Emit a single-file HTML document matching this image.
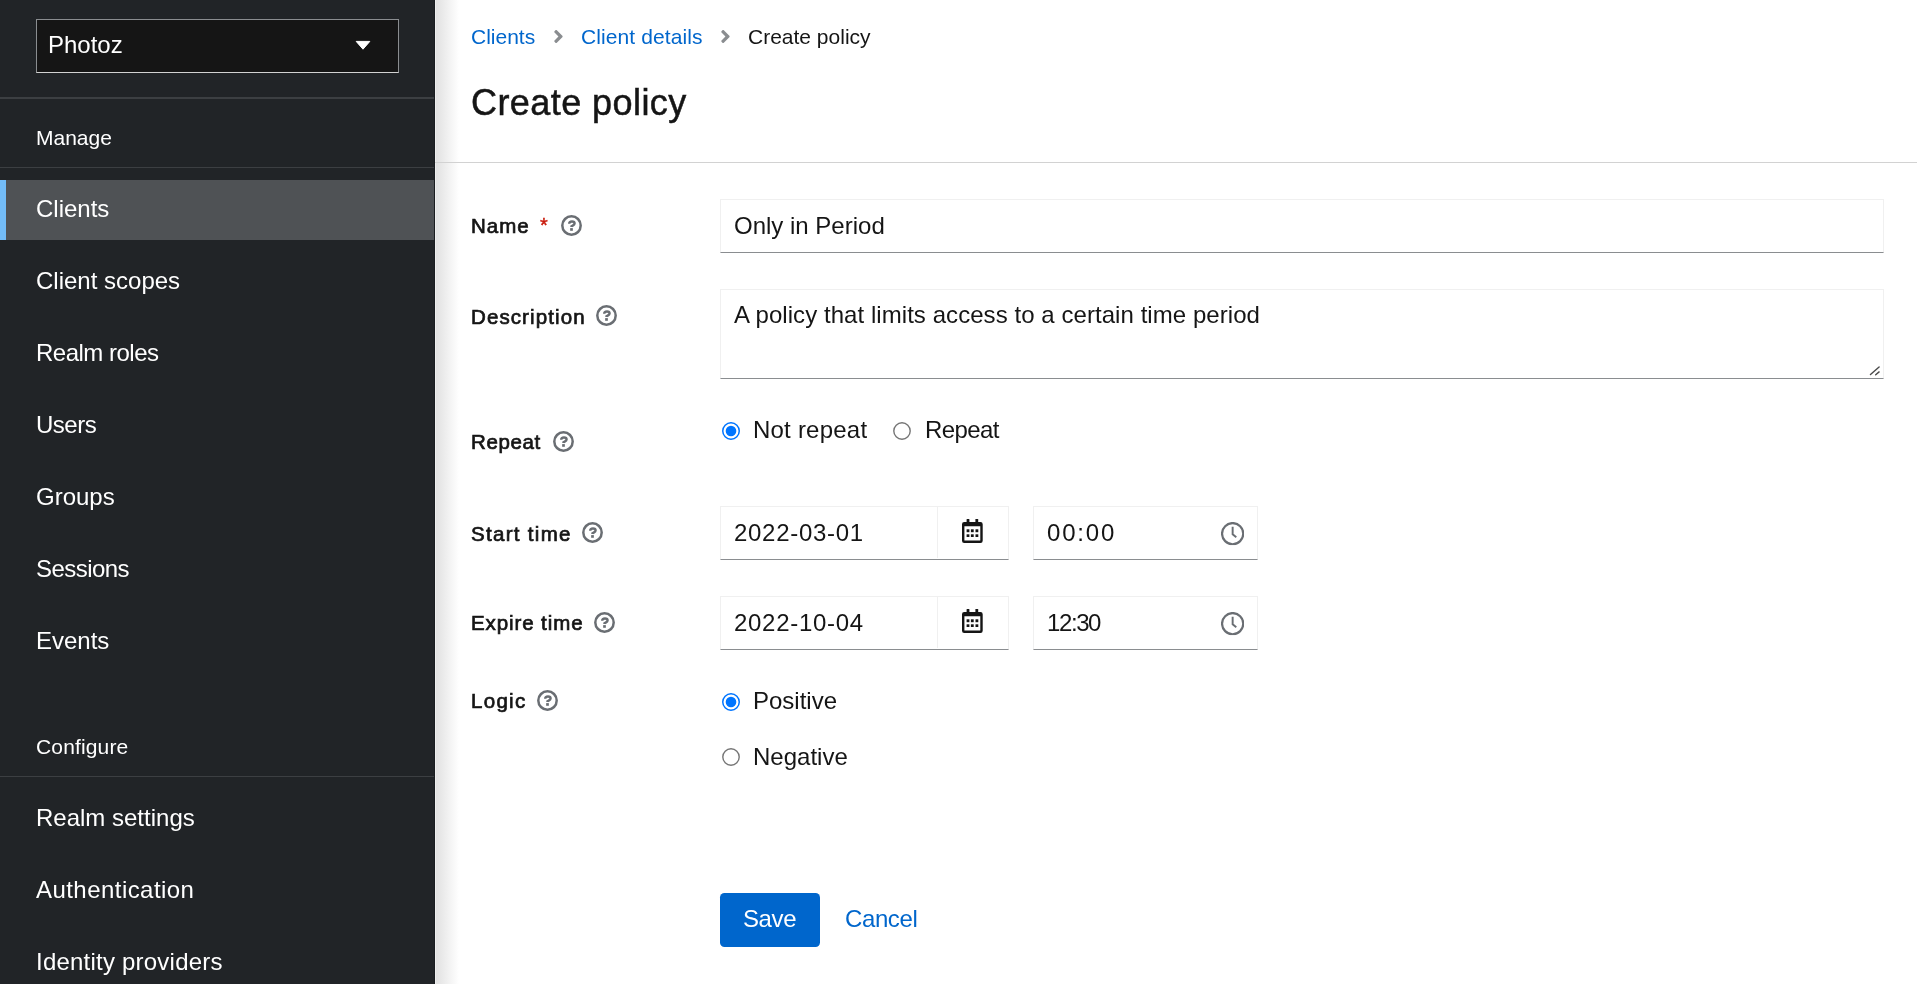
<!DOCTYPE html>
<html><head><meta charset="utf-8">
<style>body{will-change:transform}
*{box-sizing:border-box;margin:0;padding:0}
html,body{width:1917px;height:984px;overflow:hidden;background:#fff;font-family:"Liberation Sans",sans-serif;color:#151515}
.a{position:absolute;white-space:nowrap}
#side{position:absolute;left:0;top:0;width:435px;height:984px;background:#212427}
#shadow{position:absolute;left:435px;top:0;width:24px;height:984px;background:linear-gradient(to right,#e0e0e0,rgba(255,255,255,0))}
#sedge{position:absolute;left:434px;top:0;width:1px;height:984px;background:#1a1d20}
#sedge2{position:absolute;left:435px;top:0;width:1px;height:984px;background:#eeeeee}
.sep{position:absolute;left:0;width:435px;height:1.5px;background:#3c3f42}
.nav{position:absolute;left:36px;font-size:24px;line-height:24px;color:#fff}
.sect{position:absolute;left:36px;font-size:21px;line-height:21px;color:#fff}
.lbl{position:absolute;left:471px;font-size:20.5px;line-height:20.5px;font-weight:normal;-webkit-text-stroke:0.7px #151515;color:#151515}
.inp{position:absolute;background:#fff;border:1.2px solid #f0f0f0;border-bottom:1.5px solid #8a8d90}
.txt{position:absolute;font-size:24px;line-height:24px;color:#151515}
.help{position:absolute;width:21px;height:21px}
.radio{position:absolute;width:18px;height:18px}
</style></head><body>
<svg width="0" height="0" style="position:absolute">
<defs>
<symbol id="qc" viewBox="0 0 21 21"><circle cx="10.5" cy="10.5" r="9.2" fill="none" stroke="#6a6e73" stroke-width="2.5"/><path d="M8.2 8.8 C8.2 7.3 9.4 6.5 11.0 6.5 C12.6 6.5 13.6 7.4 13.6 8.6 C13.6 10.1 11.6 10.4 10.5 11.3 V12.0" fill="none" stroke="#6a6e73" stroke-width="2.4"/><rect x="9.15" y="13.1" width="2.7" height="2.7" fill="#6a6e73"/></symbol>
<symbol id="cal" viewBox="0 0 21 24"><path fill-rule="evenodd" fill="#151515" d="M2.2 3 H18.5 Q20.7 3 20.7 5.2 V21.7 Q20.7 23.9 18.5 23.9 H2.2 Q0 23.9 0 21.7 V5.2 Q0 3 2.2 3 Z M2.4 7.2 V21.6 H18.3 V7.2 Z"/><rect x="4.6" y="0" width="2.8" height="3.6" rx="0.5" fill="#151515"/><rect x="13.4" y="0" width="2.8" height="3.6" rx="0.5" fill="#151515"/><g fill="#151515"><rect x="4.6" y="10.3" width="2.8" height="2.9"/><rect x="8.9" y="10.3" width="2.8" height="2.9"/><rect x="13.5" y="10.3" width="2.8" height="2.9"/><rect x="4.6" y="15.3" width="2.8" height="2.7"/><rect x="8.9" y="15.3" width="2.8" height="2.7"/><rect x="13.5" y="15.3" width="2.8" height="2.7"/></g></symbol>
<symbol id="clk" viewBox="0 0 23.3 23.3"><circle cx="11.65" cy="11.65" r="10.6" fill="none" stroke="#6a6e73" stroke-width="2.2"/><path d="M11.65 4.8 V12.3 L15.3 15.2" fill="none" stroke="#6a6e73" stroke-width="1.95"/></symbol>
<symbol id="ron" viewBox="0 0 18 18"><circle cx="9" cy="9" r="8.25" fill="#fff" stroke="#0075ff" stroke-width="1.5"/><circle cx="9" cy="9" r="5.3" fill="#0075ff"/></symbol>
<symbol id="roff" viewBox="0 0 18 18"><circle cx="9" cy="9" r="8.2" fill="#fff" stroke="#767676" stroke-width="1.4"/></symbol>
</defs></svg>
<div id="side">
  <div class="a" style="left:36px;top:19px;width:363px;height:54px;background:#151515;border:1.2px solid #8a8d90;border-bottom-color:#d2d2d2"></div>
  <div class="nav" style="left:48px;top:33px">Photoz</div>
  <svg class="a" style="left:355px;top:40px" width="16" height="10" viewBox="0 0 16 10"><path d="M1.2 1.4 H14.8 L8 9.2 Z" fill="#fff" stroke="#fff" stroke-width="1" stroke-linejoin="round"/></svg>
  <div class="sep" style="top:97px"></div>
  <div class="sect" style="top:127px">Manage</div>
  <div class="sep" style="top:166.5px"></div>
  <div class="a" style="left:0;top:180px;width:435px;height:60px;background:#4f5255"></div>
  <div class="a" style="left:0;top:180px;width:6px;height:60px;background:#73bcf7"></div>
  <div class="nav" style="top:197px">Clients</div>
  <div class="nav" style="top:269px">Client scopes</div>
  <div class="nav" style="top:341px;letter-spacing:-0.5px">Realm roles</div>
  <div class="nav" style="top:413px;letter-spacing:-0.5px">Users</div>
  <div class="nav" style="top:485px">Groups</div>
  <div class="nav" style="top:557px;letter-spacing:-0.55px">Sessions</div>
  <div class="nav" style="top:629px">Events</div>
  <div class="sect" style="top:736px;letter-spacing:0.15px">Configure</div>
  <div class="sep" style="top:776px;height:1px"></div>
  <div class="nav" style="top:806px">Realm settings</div>
  <div class="nav" style="top:878px;letter-spacing:0.45px">Authentication</div>
  <div class="nav" style="top:950px;letter-spacing:0.22px">Identity providers</div>
</div>
<div id="shadow"></div>
<div id="sedge"></div>
<div id="sedge2"></div>

<!-- header -->
<div class="a" style="left:471px;top:26px;font-size:21px;line-height:21px;color:#0066cc">Clients</div>
<svg class="a" style="left:554.1px;top:30px" width="8.8" height="13" viewBox="22.6 96 208.8 320"><path fill="#8a8d90" d="M224.3 273l-136 136c-9.4 9.4-24.6 9.4-33.9 0l-22.6-22.6c-9.4-9.4-9.4-24.6 0-33.9l96.4-96.4-96.4-96.4c-9.4-9.4-9.4-24.6 0-33.9L54.3 103c9.4-9.4 24.6-9.4 33.9 0l136 136c9.5 9.4 9.5 24.6.1 34z"/></svg>
<div class="a" style="left:581px;top:26px;font-size:21px;line-height:21px;color:#0066cc;letter-spacing:0.1px">Client details</div>
<svg class="a" style="left:721.1px;top:30px" width="8.8" height="13" viewBox="22.6 96 208.8 320"><path fill="#8a8d90" d="M224.3 273l-136 136c-9.4 9.4-24.6 9.4-33.9 0l-22.6-22.6c-9.4-9.4-9.4-24.6 0-33.9l96.4-96.4-96.4-96.4c-9.4-9.4-9.4-24.6 0-33.9L54.3 103c9.4-9.4 24.6-9.4 33.9 0l136 136c9.5 9.4 9.5 24.6.1 34z"/></svg>
<div class="a" style="left:748px;top:26px;font-size:21px;line-height:21px;color:#151515">Create policy</div>
<div class="a" style="left:471px;top:85px;font-size:36px;line-height:36px;letter-spacing:0.43px;-webkit-text-stroke:0.5px #151515;color:#151515">Create policy</div>
<div class="a" style="left:435px;top:162px;width:1482px;height:1px;background:#d2d2d2"></div>

<!-- form -->
<div class="lbl" style="top:216px;letter-spacing:1.0px">Name</div>
<div class="a" style="left:540px;top:215px;font-size:20px;line-height:20px;color:#c9190b;-webkit-text-stroke:0.4px #c9190b">*</div>
<div class="lbl" style="top:307px;letter-spacing:1.1px">Description</div>
<div class="lbl" style="top:432px;letter-spacing:0.6px">Repeat</div>
<div class="lbl" style="top:524px;letter-spacing:1.3px">Start time</div>
<div class="lbl" style="top:613px;letter-spacing:0.9px">Expire time</div>
<div class="lbl" style="top:691px;letter-spacing:1.3px">Logic</div>

<div class="inp" style="left:720px;top:199px;width:1164px;height:54px"></div>
<div class="txt" style="left:734px;top:214px">Only in Period</div>
<div class="inp" style="left:720px;top:289px;width:1164px;height:90px"></div>
<div class="txt" style="left:734px;top:303px;letter-spacing:0.06px">A policy that limits access to a certain time period</div>

<div class="inp" style="left:720px;top:506px;width:289px;height:54px"></div>
<div class="a" style="left:937px;top:507px;width:1.2px;height:51px;background:#f0f0f0"></div>
<div class="txt" style="left:734px;top:521px;letter-spacing:0.7px">2022-03-01</div>
<div class="inp" style="left:1033px;top:506px;width:225px;height:54px"></div>
<div class="txt" style="left:1047px;top:521px;letter-spacing:1.8px">00:00</div>

<div class="inp" style="left:720px;top:596px;width:289px;height:54px"></div>
<div class="a" style="left:937px;top:597px;width:1.2px;height:51px;background:#f0f0f0"></div>
<div class="txt" style="left:734px;top:611px;letter-spacing:0.7px">2022-10-04</div>
<div class="inp" style="left:1033px;top:596px;width:225px;height:54px"></div>
<div class="txt" style="left:1047px;top:611px;letter-spacing:-1.4px">12:30</div>

<div class="txt" style="left:753px;top:418px;letter-spacing:0.22px">Not repeat</div>
<div class="txt" style="left:925px;top:418px;letter-spacing:-0.6px">Repeat</div>
<div class="txt" style="left:753px;top:689px">Positive</div>
<div class="txt" style="left:753px;top:745px">Negative</div>

<div class="a" style="left:720px;top:893px;width:100px;height:54px;background:#0066cc;border-radius:4.5px"></div>
<div class="txt" style="left:743px;top:907px;color:#fff;letter-spacing:-0.4px">Save</div>
<div class="txt" style="left:845px;top:907px;color:#0066cc;letter-spacing:-0.4px">Cancel</div>

<!-- help icons -->
<svg class="a" style="left:561.00px;top:214.85px" width="21" height="21"><use href="#qc"/></svg>
<svg class="a" style="left:595.85px;top:304.95px" width="21" height="21"><use href="#qc"/></svg>
<svg class="a" style="left:552.95px;top:430.65px" width="21" height="21"><use href="#qc"/></svg>
<svg class="a" style="left:581.95px;top:522.05px" width="21" height="21"><use href="#qc"/></svg>
<svg class="a" style="left:594.10px;top:611.85px" width="21" height="21"><use href="#qc"/></svg>
<svg class="a" style="left:536.95px;top:689.55px" width="21" height="21"><use href="#qc"/></svg>
<!-- calendar / clock -->
<svg class="a" style="left:962.3px;top:519px" width="21" height="24"><use href="#cal"/></svg>
<svg class="a" style="left:962.3px;top:609px" width="21" height="24"><use href="#cal"/></svg>
<svg class="a" style="left:1221.2px;top:522.3px" width="23.3" height="23.3"><use href="#clk"/></svg>
<svg class="a" style="left:1221.2px;top:612.3px" width="23.3" height="23.3"><use href="#clk"/></svg>
<!-- radios -->
<svg class="a" style="left:722px;top:422px" width="18" height="18"><use href="#ron"/></svg>
<svg class="a" style="left:893px;top:422px" width="18" height="18"><use href="#roff"/></svg>
<svg class="a" style="left:722px;top:693px" width="18" height="18"><use href="#ron"/></svg>
<svg class="a" style="left:722px;top:748px" width="18" height="18"><use href="#roff"/></svg>
<!-- resize grip -->
<svg class="a" style="left:1866px;top:365px" width="14" height="13" viewBox="0 0 14 13"><path d="M4.5 9.6 L13.1 1.9 M9.7 9.7 L13.1 6.9" stroke="#4a4a4a" stroke-width="1.4" stroke-linecap="round" fill="none"/></svg>
</body></html>
